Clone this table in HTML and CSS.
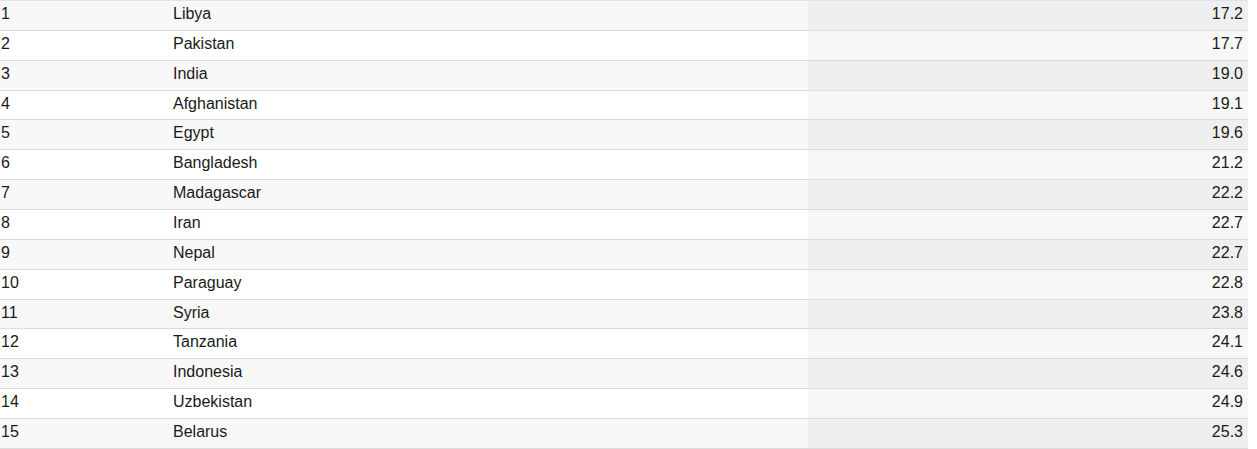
FILE: index.html
```html
<!DOCTYPE html>
<html>
<head>
<meta charset="utf-8">
<link rel="stylesheet" href="styles.css">
</head>
<body>
<div class="tbl">
  <div class="row"><div class="c rank">1</div><div class="c name">Libya</div><div class="c val">17.2</div></div>
  <div class="row"><div class="c rank">2</div><div class="c name">Pakistan</div><div class="c val">17.7</div></div>
  <div class="row"><div class="c rank">3</div><div class="c name">India</div><div class="c val">19.0</div></div>
  <div class="row"><div class="c rank">4</div><div class="c name">Afghanistan</div><div class="c val">19.1</div></div>
  <div class="row"><div class="c rank">5</div><div class="c name">Egypt</div><div class="c val">19.6</div></div>
  <div class="row"><div class="c rank">6</div><div class="c name">Bangladesh</div><div class="c val">21.2</div></div>
  <div class="row"><div class="c rank">7</div><div class="c name">Madagascar</div><div class="c val">22.2</div></div>
  <div class="row"><div class="c rank">8</div><div class="c name">Iran</div><div class="c val">22.7</div></div>
  <div class="row"><div class="c rank">9</div><div class="c name">Nepal</div><div class="c val">22.7</div></div>
  <div class="row"><div class="c rank">10</div><div class="c name">Paraguay</div><div class="c val">22.8</div></div>
  <div class="row"><div class="c rank">11</div><div class="c name">Syria</div><div class="c val">23.8</div></div>
  <div class="row"><div class="c rank">12</div><div class="c name">Tanzania</div><div class="c val">24.1</div></div>
  <div class="row"><div class="c rank">13</div><div class="c name">Indonesia</div><div class="c val">24.6</div></div>
  <div class="row"><div class="c rank">14</div><div class="c name">Uzbekistan</div><div class="c val">24.9</div></div>
  <div class="row"><div class="c rank">15</div><div class="c name">Belarus</div><div class="c val">25.3</div></div>
</div>
</body>
</html>
```
FILE: styles.css
```css
html, body {
  margin: 0;
  padding: 0;
  background: #fff;
}
body {
  font-family: "Liberation Sans", Arial, sans-serif;
  font-size: 16px;
  color: #1a1a1a;
}
.tbl {
  width: 1248px;
  border-top: 1px solid #dce5f0;
}
.row {
  display: grid;
  grid-template-columns: 170px 638px 1fr;
  height: 29.86px;
  box-sizing: border-box;
  border-bottom: 1px solid #dcdcdc;
  background: #fff;
}
.row:nth-child(odd) {
  background: #f8f8f8;
}
.c {
  display: flex;
  align-items: center;
  white-space: nowrap;
  padding-bottom: 3px;
}
.rank {
  padding-left: 1px;
}
.name {
  padding-left: 3px;
}
.val {
  justify-content: flex-end;
  padding-right: 5px;
  background: #f7f7f7;
}
.row:nth-child(odd) .val {
  background: #efefef;
}
```
